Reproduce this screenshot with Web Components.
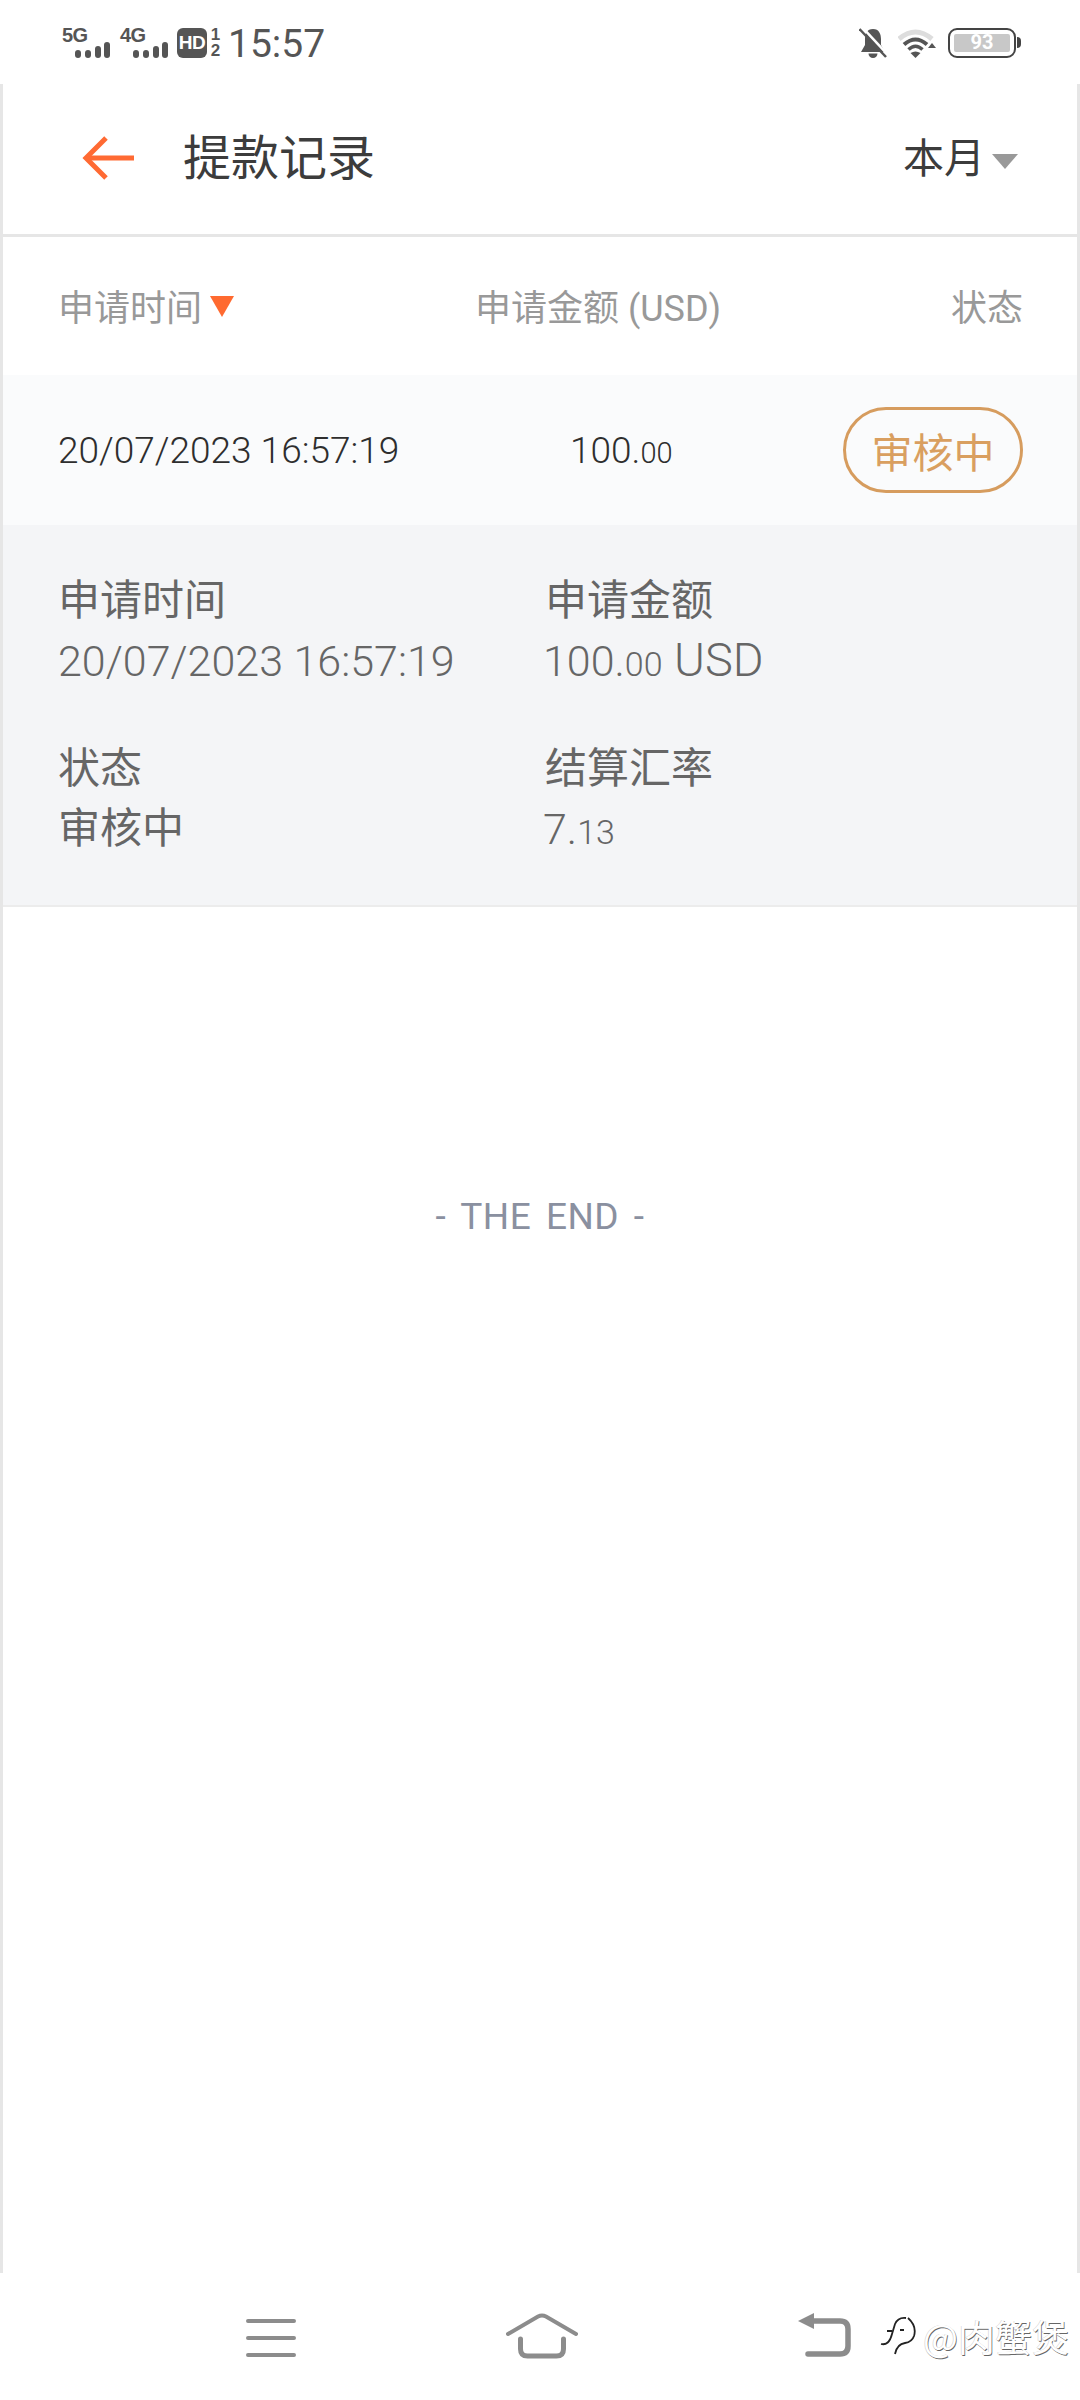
<!DOCTYPE html>
<html lang="zh">
<head>
<meta charset="utf-8">
<title>提款记录</title>
<style>
  html, body { margin: 0; padding: 0; background: #fff; }
  body {
    width: 1080px;
    height: 2400px;
    display: flex;
    flex-direction: column;
    overflow: hidden;
    font-family: Roboto, "Noto Sans CJK SC", sans-serif;
  }
</style>
</head>
<body>
  <status-bar></status-bar>
  <page-frame>
    <title-bar>提款记录</title-bar>
    <table-head></table-head>
    <record-row date="20/07/2023 16:57:19" status="审核中">
      <money-text slot="amount" whole="100." cents="00" small="29"></money-text>
    </record-row>
    <record-detail>
      <detail-item label="申请时间"><money-text whole="20/07/2023 16:57:19"></money-text></detail-item>
      <detail-item label="申请金额" class="shift"><money-text whole="100." cents="00" small="34" tail=" USD"></money-text></detail-item>
      <detail-item label="状态">审核中</detail-item>
      <detail-item label="结算汇率" class="shift"><money-text whole="7." cents="13" small="34"></money-text></detail-item>
    </record-detail>
    <end-mark>- THE END -</end-mark>
  </page-frame>
  <system-nav></system-nav>

<script>
const FONT = 'Roboto, "Noto Sans CJK SC", sans-serif';

// Small helper so every element below stays a one-liner to set up
class ShadowElement extends HTMLElement {
  connectedCallback() {
    if (this.shadowRoot) return;
    this.attachShadow({ mode: "open" });
    this.shadowRoot.innerHTML = this.render();
  }
  attr(name, fallback = "") {
    return this.getAttribute(name) || fallback;
  }
}

class SignalIcon extends ShadowElement {
  render() {
    return `
      <style>
        :host { display: flex; flex-direction: column; width: 48px; height: 32px; }
        span { font: 700 20px/16px "Liberation Sans", sans-serif; color: #555; letter-spacing: -0.5px; height: 15px; }
        svg { display: block; margin-left: 13px; }
      </style>
      <span>${this.attr("label")}</span>
      <svg width="35" height="16" viewBox="0 0 35 16" fill="#555">
        <rect x="0" y="8" width="6" height="8" rx="3"/>
        <rect x="10" y="8" width="6" height="8" rx="3"/>
        <rect x="20" y="4" width="6" height="12" rx="3"/>
        <rect x="29" y="0" width="6" height="16" rx="3"/>
      </svg>`;
  }
}
customElements.define("signal-icon", SignalIcon);

class StatusBar extends ShadowElement {
  render() {
    return `
      <style>
        :host { display: flex; align-items: center; height: 84px; flex: none; box-sizing: border-box; padding: 2px 64px 0 62px; background: #fff; color: #555; }
        .left, .right { display: flex; align-items: center; }
        .left { flex: 1; }
        signal-icon + signal-icon { margin-left: 10px; }
        .hd { width: 30px; height: 30px; margin-left: 9px; border-radius: 6px; background: #555; color: #fff; font: 700 19px/30px "Liberation Sans", sans-serif; text-align: center; letter-spacing: -0.5px; }
        .sim { display: flex; flex-direction: column; align-items: center; width: 13px; margin-left: 2px; font: 700 17px/16px "Liberation Sans", sans-serif; }
        .time { margin-left: 6px; margin-top: 2px; font: 400 39px/44px Roboto, sans-serif; }
        .wifi { margin-left: 11px; }
        .battery { position: relative; width: 68px; height: 30px; margin-left: 11px; box-sizing: border-box; border: 2.5px solid #444; border-radius: 9px; display: flex; padding: 4px; }
        .battery::after { content: ""; position: absolute; left: 67px; top: 7px; width: 4px; height: 11px; background: #444; border-radius: 0 4px 4px 0; }
        .level { flex: 1; background: #c8c8c8; border-radius: 2px; color: #fff; font: 700 20px/17px Roboto, sans-serif; text-align: center; }
        svg { display: block; }
      </style>
      <div class="left">
        <signal-icon label="5G"></signal-icon>
        <signal-icon label="4G"></signal-icon>
        <div class="hd">HD</div>
        <div class="sim"><span>1</span><span>2</span></div>
        <div class="time">15:57</div>
      </div>
      <div class="right">
        <svg width="28" height="31" viewBox="0 0 28 31">
          <path fill="#555" d="M14 1C8 1 6 6 6 11v6l-4 7h24l-4-7v-6C22 6 20 1 14 1Z"/>
          <path fill="#555" d="M9.500 25.500a4.500 4.500 0 0 0 9 0Z"/>
          <path d="M3 -1 29 27" stroke="#fff" stroke-width="2.500"/>
          <path d="M0.500 1 27 29" stroke="#555" stroke-width="2.500"/>
        </svg>
        <svg class="wifi" width="39" height="30" viewBox="0 0 39 30" fill="none">
          <path d="M1 11Q17.500 -3 34 11" stroke="#ddd" stroke-width="5"/>
          <path d="M6 16.500Q17.500 6.500 29 16.500" stroke="#555" stroke-width="4"/>
          <path d="M10.500 21.500Q17.500 15 24.500 21.500" stroke="#555" stroke-width="3.500"/>
          <path d="M12.500 25Q17.500 22 22.500 25L17.500 30Z" fill="#555"/>
          <path d="M34 15l4 5h-8Z" fill="#555"/>
        </svg>
        <div class="battery"><div class="level">93</div></div>
      </div>`;
  }
}
customElements.define("status-bar", StatusBar);

class PageFrame extends ShadowElement {
  render() {
    return `
      <style>
        :host { display: flex; flex-direction: column; flex: 1; min-height: 0; border-left: 3px solid #e6e6e6; border-right: 3px solid #e6e6e6; background: #fff; }
      </style>
      <slot></slot>`;
  }
}
customElements.define("page-frame", PageFrame);

class TitleBar extends ShadowElement {
  render() {
    return `
      <style>
        :host { display: flex; align-items: center; height: 153px; flex: none; box-sizing: border-box; padding: 0 59px 0 79px; border-bottom: 3px solid #e6e6e6; font-family: ${FONT}; color: #3c3c3c; }
        .title { flex: 1; margin-left: 49px; font-size: 48px; line-height: 60px; }
        .month { font-size: 41px; line-height: 60px; }
        .caret { width: 0; height: 0; margin: 4px 0 0 7px; border-left: 13px solid transparent; border-right: 13px solid transparent; border-top: 15px solid #999; }
        svg { display: block; margin-top: -2px; }
      </style>
      <svg width="52" height="44" viewBox="0 0 52 44" fill="none" stroke="#ff6a33" stroke-width="5">
        <path d="M52 22H4"/>
        <path d="M24 2 4 22l20 20"/>
      </svg>
      <div class="title"><slot></slot></div>
      <div class="month">本月</div>
      <div class="caret"></div>`;
  }
}
customElements.define("title-bar", TitleBar);

class TableHead extends ShadowElement {
  render() {
    return `
      <style>
        :host { display: flex; align-items: center; height: 138px; flex: none; box-sizing: border-box; padding: 5px 54px 0 55px; font-family: ${FONT}; font-size: 36px; line-height: 50px; color: #999; }
        .sort { display: flex; align-items: center; width: 417px; }
        .sort i { width: 0; height: 0; margin: 0 0 4px 8px; border-left: 12px solid transparent; border-right: 12px solid transparent; border-top: 21px solid #ff6a30; }
        .amount { flex: 1; }
      </style>
      <div class="sort">申请时间<i></i></div>
      <div class="amount">申请金额 (USD)</div>
      <div>状态</div>`;
  }
}
customElements.define("table-head", TableHead);

class MoneyText extends ShadowElement {
  render() {
    const tail = this.attr("tail");
    return `
      <style>
        :host { display: inline; }
        span { white-space: pre; font-weight: 300; }
        small { font-size: ${this.attr("small", "28")}px; }
        .tail { font-size: 47px; line-height: 1; }
      </style>
      <span>${this.attr("whole")}<small>${this.attr("cents")}</small>${tail ? `<span class="tail">${tail}</span>` : ""}</span>`;
  }
}
customElements.define("money-text", MoneyText);

class StatusPill extends ShadowElement {
  render() {
    return `
      <style>
        :host { display: flex; align-items: center; justify-content: center; width: 180px; height: 86px; box-sizing: border-box; border: 3px solid #d69c5e; border-radius: 43px; color: #d99f60; font-size: 41px; }
      </style>
      <slot></slot>`;
  }
}
customElements.define("status-pill", StatusPill);

class RecordRow extends ShadowElement {
  render() {
    return `
      <style>
        :host { display: flex; align-items: center; height: 150px; flex: none; box-sizing: border-box; padding: 0 54px 0 55px; background: #fafbfc; font-family: ${FONT}; font-size: 37px; color: #2e2e2e; }
        .date { width: 340px; white-space: nowrap; font-weight: 300; }
        .amount { flex: 1; padding-left: 172px; }
      </style>
      <div class="date">${this.attr("date")}</div>
      <div class="amount"><slot name="amount"></slot></div>
      <status-pill>${this.attr("status")}</status-pill>`;
  }
}
customElements.define("record-row", RecordRow);

class RecordDetail extends ShadowElement {
  render() {
    return `
      <style>
        :host { display: grid; grid-template-columns: 487px 1fr; row-gap: 48px; flex: none; box-sizing: border-box; padding: 46px 55px 46px; border-bottom: 2px solid #ececec; background: #f4f5f7; }
      </style>
      <slot></slot>`;
  }
}
customElements.define("record-detail", RecordDetail);

class DetailItem extends ShadowElement {
  render() {
    return `
      <style>
        :host { display: block; font-family: ${FONT}; color: #666; font-size: 42px; line-height: 60px; }
        :host(.shift) .value { margin-left: -2px; }
        .label, .value { height: 60px; white-space: nowrap; }
        ::slotted(money-text) { font-size: 43px; }
      </style>
      <div class="label">${this.attr("label")}</div>
      <div class="value"><slot></slot></div>`;
  }
}
customElements.define("detail-item", DetailItem);

class EndMark extends ShadowElement {
  render() {
    return `
      <style>
        :host { display: block; padding: 283px 0 0 0; font-family: ${FONT}; font-size: 37px; font-weight: 400; letter-spacing: 0.5px; word-spacing: 5px; line-height: 54px; text-align: center; color: #8a90a0; }
      </style>
      <slot></slot>`;
  }
}
customElements.define("end-mark", EndMark);

class SystemNav extends ShadowElement {
  render() {
    return `
      <style>
        :host { position: relative; display: flex; align-items: flex-start; height: 127px; flex: none; background: #fff; }
        svg { display: block; }
        .menu { margin: 45px 0 0 246px; }
        .home { margin: 40px 0 0 210px; }
        .back { margin: 40px 0 0 220px; }
        .mark { position: absolute; left: 880px; top: 38px; display: flex; align-items: center; color: #fff; font: 37px/50px "Noto Sans CJK SC", sans-serif; text-shadow: 0.7px 0.7px 0 #666, -0.5px -0.5px 0 #ccc; }
        .mark span { margin-left: 7px; }
      </style>
      <svg class="menu" width="50" height="40" viewBox="0 0 50 40" stroke="#8c8c8c" stroke-width="4" stroke-linecap="round">
        <path d="M2 3H48M2 20H48M2 37H48"/>
      </svg>
      <svg class="home" width="72" height="46" viewBox="0 0 72 46" fill="none" stroke="#8c8c8c" stroke-linecap="round" stroke-width="4">
        <path d="M2 21 32 3.500Q36 1.500 40 3.500L70 21"/>
        <path d="M14.500 26V36Q14.500 43 21.500 43H50.500Q57.500 43 57.500 36V26" stroke-width="5"/>
      </svg>
      <svg class="back" width="54" height="46" viewBox="0 0 54 46" fill="none">
        <path d="M0 8 16 0V16Z" fill="#8c8c8c"/>
        <path d="M10 8H42Q50 8 50 16V33Q50 41 42 41H10" stroke="#8c8c8c" stroke-width="5.500" stroke-linecap="round"/>
      </svg>
      <div class="mark">
        <svg width="36" height="40" viewBox="0 0 36 40" fill="none" stroke="#222" stroke-width="1.800">
          <path d="M1 28Q9 30 12 18L15 8Q18 1 26 2"/>
          <path d="M28 2Q37 10 34 20Q32 26 25 27Q17 28 15 38"/>
          <path d="M7 15H12M20 14H24"/>
        </svg>
        <span>@肉蟹煲</span>
      </div>`;
  }
}
customElements.define("system-nav", SystemNav);
</script>
</body>
</html>
